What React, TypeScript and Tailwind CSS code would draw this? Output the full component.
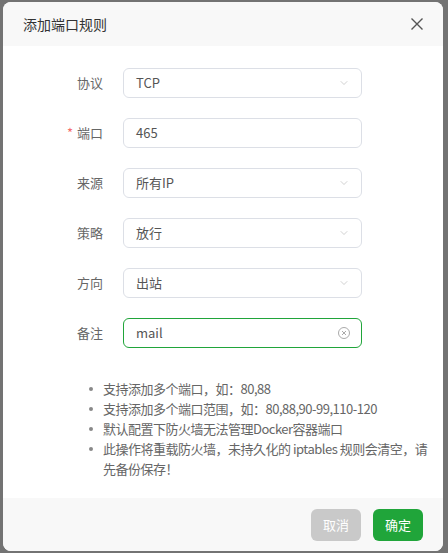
import { ChevronDown } from "lucide-react";

const font = { fontFamily: '"Noto Sans CJK SC", "Noto Sans", sans-serif' };

const rows = [
  { label: "协议", value: "TCP", kind: "select" },
  { label: "端口", value: "465", kind: "input", required: true },
  { label: "来源", value: "所有IP", kind: "select" },
  { label: "策略", value: "放行", kind: "select" },
  { label: "方向", value: "出站", kind: "select" },
  { label: "备注", value: "mail", kind: "active" },
];

const notes = [
  "支持添加多个端口，如：80,88",
  "支持添加多个端口范围，如：80,88,90-99,110-120",
  "默认配置下防火墙无法管理Docker容器端口",
  "此操作将重载防火墙，未持久化的 iptables 规则会清空，请先备份保存！",
];

function Field({ row }: { row: (typeof rows)[number] }) {
  const border =
    row.kind === "active" ? "border-[#20a53a]" : "border-[#dcdfe6]";
  return (
    <div className="flex items-center h-[30px] mb-[20px]">
      <div className="w-[100px] text-right text-[13px] text-[#666]">
        {row.required && <span className="text-[#f56c6c] mr-[4px]">*</span>}
        {row.label}
      </div>
      <div
        className={`ml-[20px] w-[239px] h-[30px] border ${border} rounded-[6px] flex items-center justify-between pl-[12px] pr-[11px] text-[13px] text-[#555]`}
      >
        <span>{row.value}</span>
        {row.kind === "select" && (
          <ChevronDown className="w-[12px] h-[12px] text-[#b8b8b8]" strokeWidth={1.3} />
        )}
        {row.kind === "active" && (
          <svg width="12" height="12" viewBox="0 0 12 12" fill="none" stroke="#aaa" strokeWidth="1">
            <circle cx="6" cy="6" r="5.5" />
            <path d="M4 4l4 4M8 4l-4 4" />
          </svg>
        )}
      </div>
    </div>
  );
}

export default function App() {
  return (
    <div className="w-[448px] h-[553px] bg-[#737373] pt-[2px] pl-[3px]" style={font}>
      <div className="w-[440px] h-[549px] rounded-[8px] overflow-hidden bg-white flex flex-col">
        {/* Header */}
        <div className="h-[44px] bg-[#f8f8f8] flex items-center justify-between pl-[20px] pr-[20px] shrink-0">
          <span className="text-[14px] text-[#333]">添加端口规则</span>
          <svg width="12" height="12" viewBox="0 0 12 12" stroke="#555" strokeWidth="1.4">
            <path d="M0.5 0.5l11 11M11.5 0.5l-11 11" />
          </svg>
        </div>

        {/* Body */}
        <div className="flex-1 pt-[22px]">
          {rows.map((r) => (
            <Field key={r.label} row={r} />
          ))}
          <ul className="mt-[31px] ml-[100px] w-[326px] text-[13px] leading-[20px] text-[#666] tracking-[-0.5px]">
            {notes.map((n) => (
              <li key={n} className="relative">
                <span className="absolute -left-[14px] top-[8px] w-[4px] h-[4px] rounded-full bg-[#888]" />
                {n}
              </li>
            ))}
          </ul>
        </div>

        {/* Footer */}
        <div className="h-[53px] bg-[#f8f8f8] flex items-center justify-end gap-[12px] pr-[20px] shrink-0">
          <button className="w-[50px] h-[32px] rounded-[6px] bg-[#c9c9c9] text-white text-[13px]">
            取消
          </button>
          <button className="w-[50px] h-[32px] rounded-[6px] bg-[#20a53a] text-white text-[13px]">
            确定
          </button>
        </div>
      </div>
    </div>
  );
}
